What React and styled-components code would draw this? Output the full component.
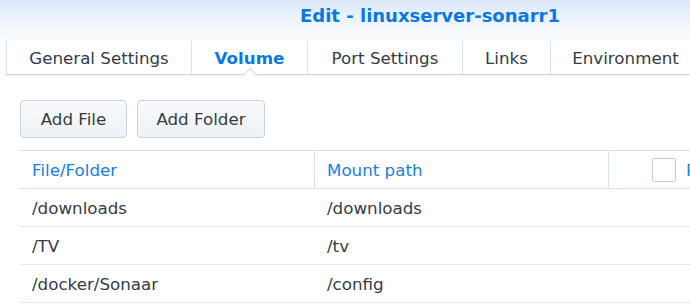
import React from 'react';
import styled, {createGlobalStyle} from 'styled-components';

const GlobalStyle = createGlobalStyle`
  html, body {
    margin: 0;
    padding: 0;
    background: #fff;
    font-family: "DejaVu Sans", Verdana, sans-serif;
    overflow: hidden;
  }
`;

const Window = styled.div`
  width: 690px;
  height: 307px;
  overflow: hidden;
  background: #fff;
`;

const TitleBar = styled.div`
  height: 40px;
  background: linear-gradient(to bottom, #dce9f8 0%, #eef4fc 55%, #fbfdff 100%);
  display: flex;
  padding-left: 300px;
  box-sizing: border-box;
`;

const Title = styled.h1`
  margin: 0;
  padding-top: 5px;
  font-size: 18px;
  font-weight: bold;
  color: #0a78e2;
  white-space: nowrap;
`;

const TabBar = styled.div`
  margin-left: 6px;
  height: 34px;
  display: flex;
  border-bottom: 1px solid #d3d7dc;
  box-shadow: 0 1px 2px rgba(0, 0, 0, 0.06);
`;

const Tab = styled.div`
  position: relative;
  display: flex;
  align-items: center;
  justify-content: center;
  width: ${p => p.$width}px;
  flex: none;
  font-size: 16.7px;
  white-space: nowrap;
  color: ${p => (p.$active ? '#0a78e2' : '#333c45')};
  font-weight: ${p => (p.$active ? 'bold' : 'normal')};
  border-left: 1px solid #d8e2ec;
  margin-top: 1px;
  height: 33px;
  box-sizing: border-box;

  ${p => p.$active && `
    &::after {
      content: '';
      position: absolute;
      bottom: -6px;
      left: 50%;
      width: 9px;
      height: 9px;
      margin-left: -5px;
      background: #fff;
      border-left: 1px solid #d3d7dc;
      border-top: 1px solid #d3d7dc;
      transform: rotate(45deg);
    }
  `}
`;

const Content = styled.div`
  padding: 25px 0 0 20px;
`;

const Toolbar = styled.div`
  display: flex;
  gap: 10px;
`;

const Button = styled.button`
  height: 38px;
  padding: 0;
  border: 1px solid #c9d3de;
  border-radius: 4px;
  background: linear-gradient(to bottom, #f8fafc, #eef2f6);
  font-family: inherit;
  font-size: 16.7px;
  color: #333c45;
  width: ${p => p.$width}px;
`;

const Table = styled.div`
  margin-top: 12px;
  border-top: 1px solid #d8e2ec;
`;

const Row = styled.div`
  display: grid;
  grid-template-columns: 295px 294px 1fr;
  height: 38px;
  border-bottom: 1px solid #e3e9ef;
  box-sizing: border-box;
`;

const HeaderRow = styled(Row)`
  border-bottom-color: #d8e2ec;
`;

const Cell = styled.div`
  display: flex;
  align-items: center;
  padding-left: 12px;
  font-size: 16.7px;
  white-space: nowrap;
  overflow: hidden;
  color: ${p => (p.$head ? '#1a7fe0' : '#333c45')};
  border-right: ${p => (p.$divider ? '1px solid #d8e2ec' : 'none')};
`;

const Check = styled.span`
  width: 22px;
  height: 22px;
  border: 1px solid #c3ccd6;
  border-radius: 2px;
  background: #fff;
  margin-left: 31px;
  margin-right: 10px;
  flex: none;
`;

const tabs = [
    {label: 'General Settings', width: 185},
    {label: 'Volume', width: 116, active: true},
    {label: 'Port Settings', width: 155},
    {label: 'Links', width: 88},
    {label: 'Environment', width: 150},
];

const rows = [
    ['/downloads', '/downloads'],
    ['/TV', '/tv'],
    ['/docker/Sonaar', '/config'],
];

export default function App() {
    return (
        <Window>
            <GlobalStyle/>
            <TitleBar>
                <Title>Edit - linuxserver-sonarr1</Title>
            </TitleBar>
            <TabBar>
                {tabs.map(t => (
                    <Tab key={t.label} $width={t.width} $active={t.active}>{t.label}</Tab>
                ))}
            </TabBar>
            <Content>
                <Toolbar>
                    <Button $width={107}>Add File</Button>
                    <Button $width={128}>Add Folder</Button>
                </Toolbar>
                <Table>
                    <HeaderRow>
                        <Cell $head $divider>File/Folder</Cell>
                        <Cell $head $divider>Mount path</Cell>
                        <Cell $head><Check/>Read-only</Cell>
                    </HeaderRow>
                    {rows.map(([a, b]) => (
                        <Row key={a}>
                            <Cell>{a}</Cell>
                            <Cell>{b}</Cell>
                            <Cell/>
                        </Row>
                    ))}
                </Table>
            </Content>
        </Window>
    );
}
